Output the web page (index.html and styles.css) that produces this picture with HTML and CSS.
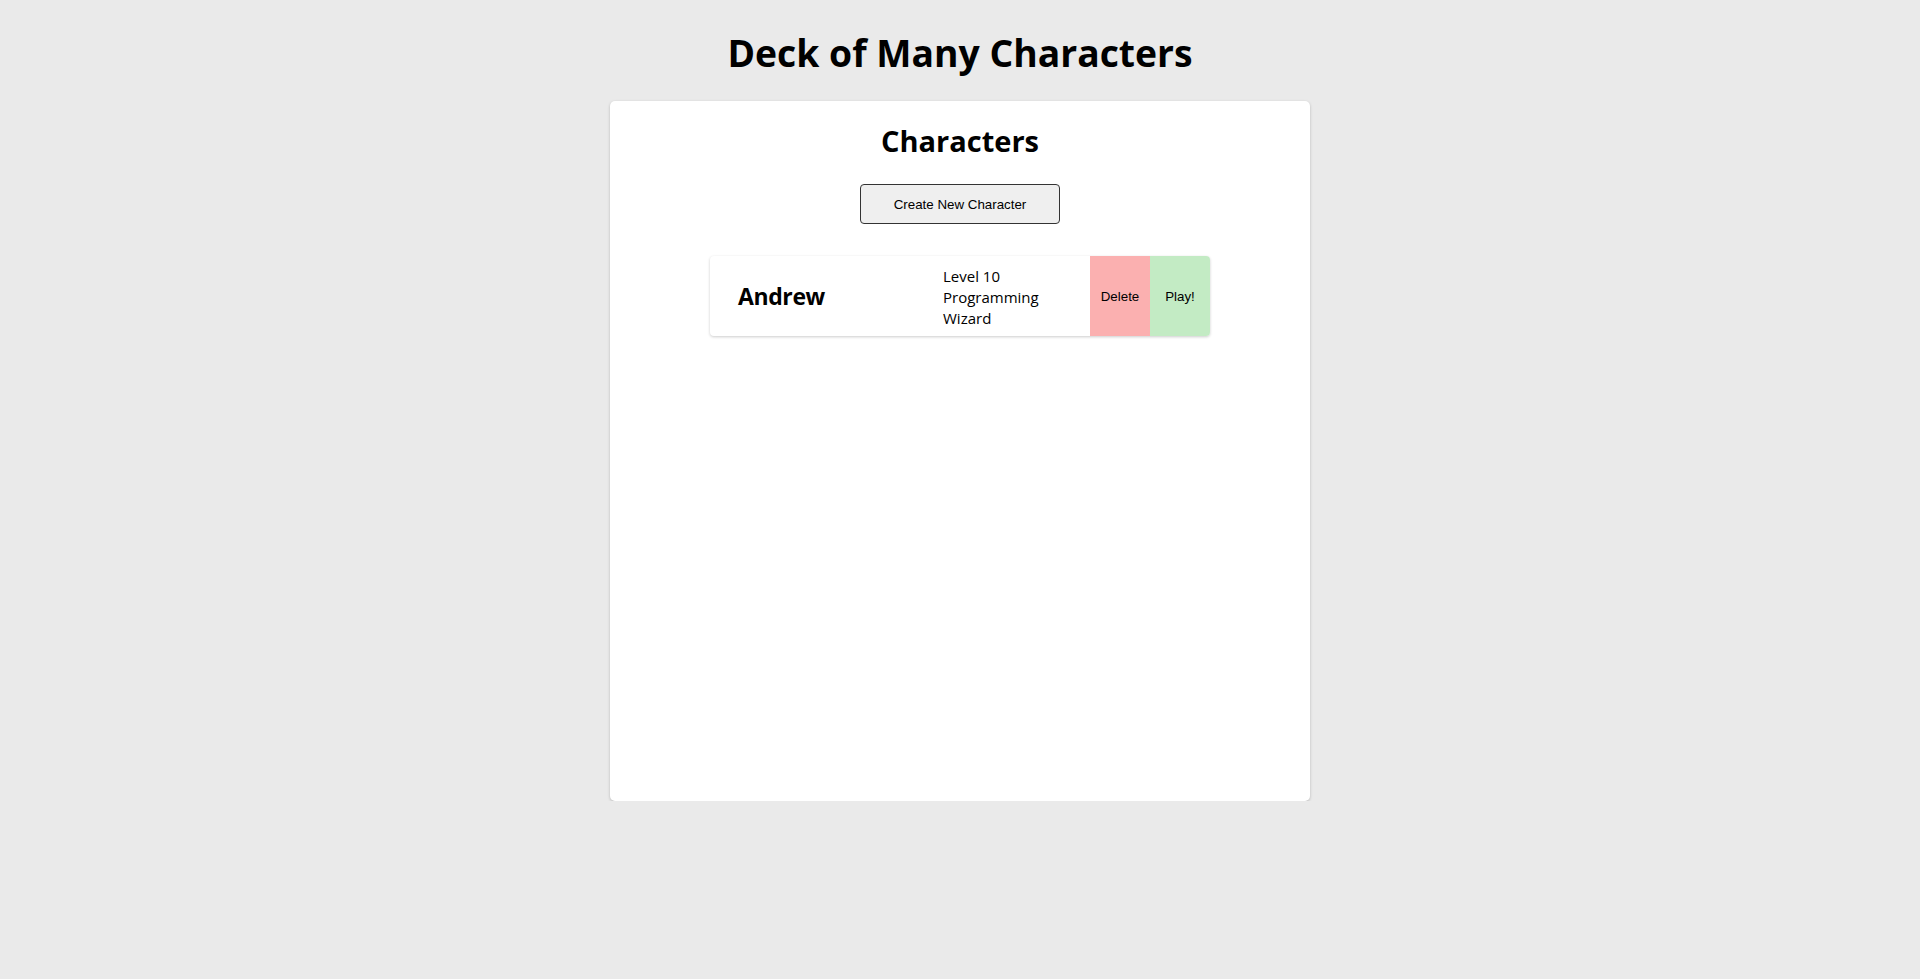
FILE: index.html
```html
<!DOCTYPE html>
<html lang="en">
<head>
<meta charset="utf-8">
<title>Deck of Many Characters</title>
<link rel="stylesheet" href="styles.css">
</head>
<body>
  <div class="app">
    <h1 class="app-title">Deck of Many Characters</h1>
    <main class="panel">
      <h2 class="panel-title">Characters</h2>
      <button class="create-btn" type="button">Create New Character</button>
      <ul class="char-list">
        <li class="char-row">
          <div class="char-name">Andrew</div>
          <div class="char-desc">Level 10 Programming Wizard</div>
          <button class="char-action delete" type="button">Delete</button>
          <button class="char-action play" type="button">Play!</button>
        </li>
      </ul>
    </main>
  </div>
</body>
</html>
```

FILE: styles.css
```css
* { box-sizing: border-box; }

html, body {
  margin: 0;
  padding: 0;
  background: #eaeaea;
  font-family: "Open Sans", "Noto Sans", "DejaVu Sans", sans-serif;
  color: #000;
}

.app {
  display: flex;
  flex-direction: column;
  align-items: center;
  padding-top: 29px;
}

.app-title {
  margin: 0 0 24px;
  font-size: 37.3px;
  line-height: 48px;
  font-weight: 700;
}

.panel {
  width: 700px;
  height: 700px;
  background: #fff;
  border-radius: 5px;
  box-shadow: 0 1px 3px rgba(0, 0, 0, 0.22);
  display: flex;
  flex-direction: column;
  align-items: center;
  padding-top: 21px;
}

.panel-title {
  margin: 0 0 24px;
  font-size: 29px;
  line-height: 38px;
  font-weight: 700;
}

.create-btn {
  width: 200px;
  height: 40px;
  background: #efefef;
  border: 1px solid #333;
  border-radius: 4px;
  font-family: "Liberation Sans", Arial, sans-serif;
  font-size: 13.333px;
  color: #000;
  padding: 0;
}

.char-list {
  list-style: none;
  margin: 32px 0 0;
  padding: 0;
  width: 500px;
}

.char-row {
  display: flex;
  align-items: stretch;
  height: 80px;
  background: #fff;
  border-radius: 4px;
  box-shadow: 0 1px 3px rgba(0, 0, 0, 0.2);
  overflow: hidden;
}

.char-name {
  width: 233px;
  padding-left: 28px;
  display: flex;
  align-items: center;
  font-size: 23px;
  font-weight: 700;
  letter-spacing: -0.4px;
}

.char-desc {
  width: 147px;
  padding-right: 30px;
  padding-top: 2px;
  display: flex;
  align-items: center;
  font-size: 15px;
  line-height: 21px;
}

.char-action {
  width: 60px;
  border: none;
  padding: 0;
  margin: 0;
  font-family: "Liberation Sans", Arial, sans-serif;
  font-size: 13.333px;
  color: #000;
}

.char-action.delete { background: #fbb0b0; }
.char-action.play { background: #c3ebc4; }
```
